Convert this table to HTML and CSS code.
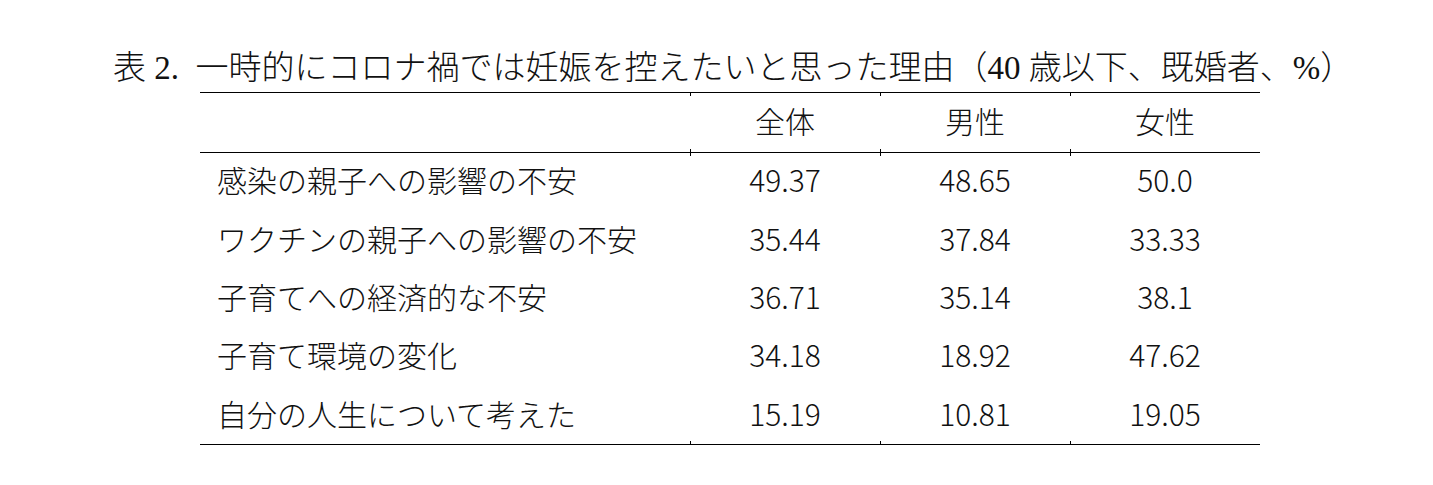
FILE: index.html
```html
<!DOCTYPE html>
<html lang="ja">
<head>
<meta charset="utf-8">
<link rel="stylesheet" href="styles.css">
</head>
<body>
<div class="page">
  <h1 class="title">表 2.&nbsp;&nbsp;一時的にコロナ禍では妊娠を控えたいと思った理由（40 歳以下、既婚者、%）</h1>
  <table class="data">
    <thead>
      <tr>
        <th class="label"></th>
        <th class="num">全体</th>
        <th class="num">男性</th>
        <th class="num">女性</th>
      </tr>
    </thead>
    <tbody>
      <tr><td class="label">感染の親子への影響の不安</td><td class="num">49.37</td><td class="num">48.65</td><td class="num">50.0</td></tr>
      <tr><td class="label">ワクチンの親子への影響の不安</td><td class="num">35.44</td><td class="num">37.84</td><td class="num">33.33</td></tr>
      <tr><td class="label">子育てへの経済的な不安</td><td class="num">36.71</td><td class="num">35.14</td><td class="num">38.1</td></tr>
      <tr><td class="label">子育て環境の変化</td><td class="num">34.18</td><td class="num">18.92</td><td class="num">47.62</td></tr>
      <tr class="last"><td class="label">自分の人生について考えた</td><td class="num">15.19</td><td class="num">10.81</td><td class="num">19.05</td></tr>
    </tbody>
  </table>
</div>
</body>
</html>
```

FILE: styles.css
```css
html, body {
  margin: 0;
  padding: 0;
  background: #ffffff;
}
.page {
  padding-top: 48px;
  width: 1433px;
  height: 485px;
  box-sizing: border-box;
}
.title {
  margin: 0 0 4px 113px;
  font-family: "Liberation Serif", "Noto Sans CJK JP", serif;
  font-weight: 300;
  font-size: 33px;
  line-height: 40px;
  color: #111;
  white-space: nowrap;
}
.data {
  margin-left: 200px;
  width: 1060px;
  border-collapse: collapse;
  font-family: "Noto Sans CJK JP", sans-serif;
  font-weight: 300;
  font-size: 30px;
  color: #111;
  border-top: 1.5px solid #000;
  border-bottom: 1.5px solid #000;
}
.data thead tr {
  height: 60px;
  border-bottom: 1.5px solid #000;
}
.data tbody tr {
  height: 58.4px;
}
.data th, .data td {
  padding: 0 0 5px 0;
  text-align: center;
  font-weight: 300;
  width: 190px;
  vertical-align: middle;
  position: relative;
}
.data .label {
  width: 473px;
  padding-left: 17px;
  text-align: left;
}
.data th.num::before,
.data th.num::after,
.data tr.last td.num::after {
  content: "";
  position: absolute;
  left: 0;
  width: 1px;
  background: #000;
}
.data th.num::before {
  top: 0;
  height: 3px;
}
.data th.num::after {
  bottom: -4px;
  height: 7px;
}
.data tr.last td.num::after {
  bottom: 0;
  height: 3px;
}
```
